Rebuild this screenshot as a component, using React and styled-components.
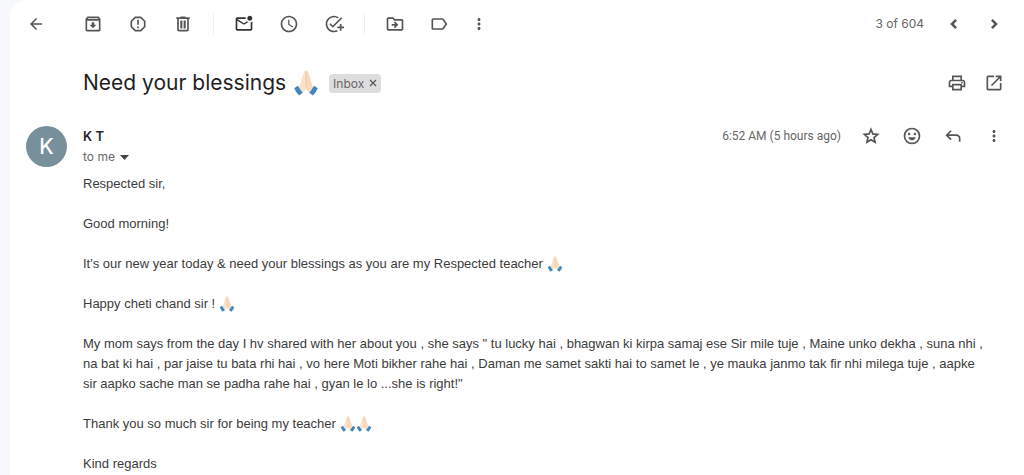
import React from 'react';
import styled, { createGlobalStyle } from 'styled-components';
import {
  MdOutlineArchive, MdReportGmailerrorred, MdSchedule, MdOutlineMarkEmailUnread, MdAddTask,
  MdOutlineDriveFileMove, MdLabelOutline, MdMoreVert, MdArrowBack,
} from 'react-icons/md';

const Global = createGlobalStyle`
  * { box-sizing: border-box; }
  body {
    margin: 0;
    background: #f6f8fc;
    color: #222;
    font-family: "Liberation Sans", Arial, sans-serif;
    overflow: hidden;
  }
`;

const Card = styled.main`
  margin-left: 10px;
  min-height: 100vh;
  padding: 0 20px 0 16px;
  background: #fff;
  border-top-left-radius: 16px;
`;

const Toolbar = styled.header`
  display: flex;
  align-items: center;
  height: 47px;
`;

const Group = styled.div`
  display: flex;
  align-items: center;
  gap: ${(p) => p.$gap}px;
`;

const Spacer = styled.div`
  flex: 1;
`;

const Divider = styled.span`
  width: 1px;
  height: 20px;
  margin: 0 20px;
  background: #eceef0;
`;

const IconButton = styled.button`
  display: flex;
  align-items: center;
  justify-content: center;
  flex: none;
  width: ${(p) => p.$width || 20}px;
  height: 20px;
  padding: 0;
  border: 0;
  background: none;
  color: ${(p) => p.$color || '#555'};
  svg { flex: none; }
`;

const BackButton = styled(IconButton)`
  margin-right: 37px;
`;

const Count = styled.span`
  margin-right: 20px;
  color: #666;
  font: 12px/20px Inter, sans-serif;
`;

const SubjectRow = styled.div`
  display: flex;
  align-items: center;
  height: 72px;
  padding-left: 57px;
`;

const Subject = styled.h1`
  display: flex;
  align-items: center;
  gap: 7px;
  margin: 0;
  font: 400 21px/28px Inter, sans-serif;
  color: #1f1f1f;
`;

const Chip = styled.div`
  display: flex;
  align-items: center;
  gap: 5px;
  height: 19px;
  margin-left: 10px;
  padding: 0 4px;
  border-radius: 4px;
  background: #ddd;
  color: #666;
  font: 12px/19px Inter, sans-serif;
`;

const ChipClose = styled.button`
  display: flex;
  padding: 0;
  border: 0;
  background: none;
  color: #555;
`;

const Message = styled.article`
  display: flex;
  gap: 16px;
  padding-top: 7px;
`;

const Avatar = styled.div`
  flex: none;
  width: 41px;
  height: 41px;
  border-radius: 50%;
  background: #78909c;
  color: #fff;
  font: 500 21px/41px Inter, sans-serif;
  text-align: center;
`;

const Content = styled.div`
  flex: 1;
  min-width: 0;
`;

const SenderRow = styled.div`
  display: flex;
  align-items: center;
  height: 20px;
`;

const Sender = styled.h2`
  margin: 0;
  font: 600 13px/20px Inter, sans-serif;
  color: #1f1f1f;
`;

const Time = styled.time`
  margin-right: 20px;
  color: #666;
  font: 12px/20px Roboto, sans-serif;
`;

const Recipient = styled.button`
  display: flex;
  align-items: center;
  gap: 5px;
  height: 22px;
  padding: 0;
  border: 0;
  background: none;
  color: #666;
  font: 12px/22px Inter, sans-serif;
`;

const Body = styled.div`
  padding: 6px 14px 0 0;
  font-size: 13px;
  line-height: 20px;
  color: #3c3c3c;
`;

const Paragraph = styled.p`
  margin: 0 0 20px;
`;

const Hands = styled.svg`
  flex: none;
  width: ${(p) => p.$size}px;
  height: ${(p) => p.$size}px;
  vertical-align: -4px;
`;

const Symbol = ({ d, size = 20 }) => (
  <svg width={size} height={size} viewBox="0 -960 960 960" fill="currentColor" aria-hidden="true">
    <path d={d} />
  </svg>
);

const Stroke = ({ d, width = 2 }) => (
  <svg width="20" height="20" viewBox="0 0 24 24" fill="none" stroke="currentColor" strokeWidth={width} aria-hidden="true">
    <path d={d} />
  </svg>
);

const icons = {
  trash: 'M280-120q-33 0-56.500-23.500T200-200v-520h-40v-80h200v-40h240v40h200v80h-40v520q0 33-23.500 56.500T680-120H280Zm400-600H280v520h400v-520ZM350-270h100v-380h-100v380Zm160 0h100v-380h-100v380Z',
  reply: 'M760-200v-160q0-50-35-85t-85-35H273l144 144-57 56-240-240 240-240 57 56-144 144h367q83 0 141.500 58.500T840-360v160h-80Z',
  print: 'M640-640v-120H320v120h-80v-200h480v200h-80Zm-480 80h640-640Zm560 100q17 0 28.500-11.500T760-500q0-17-11.500-28.500T720-540q-17 0-28.500 11.500T680-500q0 17 11.500 28.500T720-460Zm-80 260v-160H320v160h320Zm80 80H240v-160H80v-240q0-51 35-85.500t85-34.500h560q51 0 85.500 34.500T880-520v240H720v160Zm80-240v-160q0-17-11.500-28.500T760-560H200q-17 0-28.500 11.500T160-520v160h80v-80h480v80h80Z',
  open: 'M200-120q-33 0-56.500-23.500T120-200v-560q0-33 23.500-56.500T200-840h280v80H200v560h560v-280h80v280q0 33-23.500 56.500T760-120H200Zm188-212-56-56 372-372H560v-80h280v280h-80v-144L388-332Z',
  previous: 'M14.500 7 9.500 12l5 5',
  next: 'M9.500 7 14.500 12l-5 5',
  star: 'M12 4.200 14.200 9.500 20 10 15.600 13.800 16.900 19.400 12 16.400 7.100 19.400 8.400 13.800 4 10 9.800 9.500Z',
};

const FoldedHands = ({ size = 16 }) => (
  <Hands $size={size} viewBox="0 0 32 32" role="img" aria-label="folded hands">
    <path d="M1.500 22.500 6 19.500 12 28 7.500 31.500Q3.500 27.500 1.500 22.500Z" fill="#3f87bd" />
    <path d="M30.500 22.500 26 19.500 20 28 24.500 31.500Q28.500 27.500 30.500 22.500Z" fill="#3f87bd" />
    <path d="M15.800.6Q14 .4 13.400 2.800L9.600 14Q9 17.500 7 20.500L12 27.500Q15 26 15.800 22.500Z" fill="#fbe2c8" />
    <path d="M16.200.6Q18 .4 18.600 2.800L22.400 14Q23 17.500 25 20.500L20 27.500Q17 26 16.200 22.500Z" fill="#f8d9ba" />
    <path d="M16 2V23" stroke="#e3bf9b" strokeWidth="1" />
  </Hands>
);

const Smiley = () => (
  <svg width="20" height="20" viewBox="0 0 24 24" fill="none" stroke="currentColor" strokeWidth="2" aria-hidden="true">
    <circle cx="12" cy="12" r="9" />
    <path d="M7.500 13.500h9q-1.200 3.500-4.500 3.500t-4.500-3.500Z" fill="currentColor" stroke="none" />
    <circle cx="8.500" cy="9.500" r="1.500" fill="currentColor" stroke="none" />
    <circle cx="15.500" cy="9.500" r="1.500" fill="currentColor" stroke="none" />
  </svg>
);

export default function App() {
  return (
    <>
      <Global />
      <Card>
        <Toolbar>
          <BackButton aria-label="Back"><MdArrowBack size={18} /></BackButton>
          <Group $gap={25}>
            <IconButton aria-label="Archive"><MdOutlineArchive size={20} /></IconButton>
            <IconButton aria-label="Report spam"><MdReportGmailerrorred size={20} /></IconButton>
            <IconButton aria-label="Delete"><Symbol d={icons.trash} /></IconButton>
          </Group>
          <Divider />
          <Group $gap={25}>
            <IconButton aria-label="Mark as unread" $color="#333"><MdOutlineMarkEmailUnread size={20} /></IconButton>
            <IconButton aria-label="Snooze"><MdSchedule size={20} /></IconButton>
            <IconButton aria-label="Add to tasks"><MdAddTask size={20} /></IconButton>
          </Group>
          <Divider />
          <Group $gap={24}>
            <IconButton aria-label="Move to"><MdOutlineDriveFileMove size={20} /></IconButton>
            <IconButton aria-label="Labels"><MdLabelOutline size={20} /></IconButton>
            <IconButton aria-label="More" $width={12}><MdMoreVert size={18} /></IconButton>
          </Group>
          <Spacer />
          <Count>3 of 604</Count>
          <Group $gap={20}>
            <IconButton aria-label="Newer"><Stroke d={icons.previous} width={3} /></IconButton>
            <IconButton aria-label="Older"><Stroke d={icons.next} width={3} /></IconButton>
          </Group>
        </Toolbar>

        <SubjectRow>
          <Subject>Need your blessings <FoldedHands size={26} /></Subject>
          <Chip>
            Inbox
            <ChipClose aria-label="Remove label">
              <svg width="8" height="8" viewBox="0 0 8 8" stroke="currentColor" strokeWidth="1.2"><path d="M1 1l6 6M7 1l-6 6" /></svg>
            </ChipClose>
          </Chip>
          <Spacer />
          <Group $gap={17}>
            <IconButton aria-label="Print"><Symbol d={icons.print} /></IconButton>
            <IconButton aria-label="Open in new window"><Symbol d={icons.open} /></IconButton>
          </Group>
        </SubjectRow>

        <Message>
          <Avatar>K</Avatar>
          <Content>
            <SenderRow>
              <Sender>K T</Sender>
              <Spacer />
              <Time>6:52 AM (5 hours ago)</Time>
              <Group $gap={21}>
                <IconButton aria-label="Star"><Stroke d={icons.star} /></IconButton>
                <IconButton aria-label="Add reaction"><Smiley /></IconButton>
                <IconButton aria-label="Reply"><Symbol d={icons.reply} /></IconButton>
                <IconButton aria-label="More options"><MdMoreVert size={18} /></IconButton>
              </Group>
            </SenderRow>
            <Recipient>
              to me
              <svg width="9" height="5" viewBox="0 0 9 5" fill="#444"><path d="M0 0h9L4.500 5Z" /></svg>
            </Recipient>
            <Body>
              <Paragraph>Respected sir,</Paragraph>
              <Paragraph>Good morning!</Paragraph>
              <Paragraph>It's our new year today &amp; need your blessings as you are my Respected teacher <FoldedHands /></Paragraph>
              <Paragraph>Happy cheti chand sir ! <FoldedHands /></Paragraph>
              <Paragraph>
                My mom says from the day I hv shared with her about you , she says " tu lucky hai , bhagwan ki kirpa samaj ese Sir mile tuje , Maine unko dekha , suna nhi ,
                na bat ki hai , par jaise tu bata rhi hai , vo here Moti bikher rahe hai , Daman me samet sakti hai to samet le , ye mauka janmo tak fir nhi milega tuje , aapke
                sir aapko sache man se padha rahe hai , gyan le lo ...she is right!"
              </Paragraph>
              <Paragraph>Thank you so much sir for being my teacher <FoldedHands /><FoldedHands /></Paragraph>
              <Paragraph>Kind regards</Paragraph>
            </Body>
          </Content>
        </Message>
      </Card>
    </>
  );
}
